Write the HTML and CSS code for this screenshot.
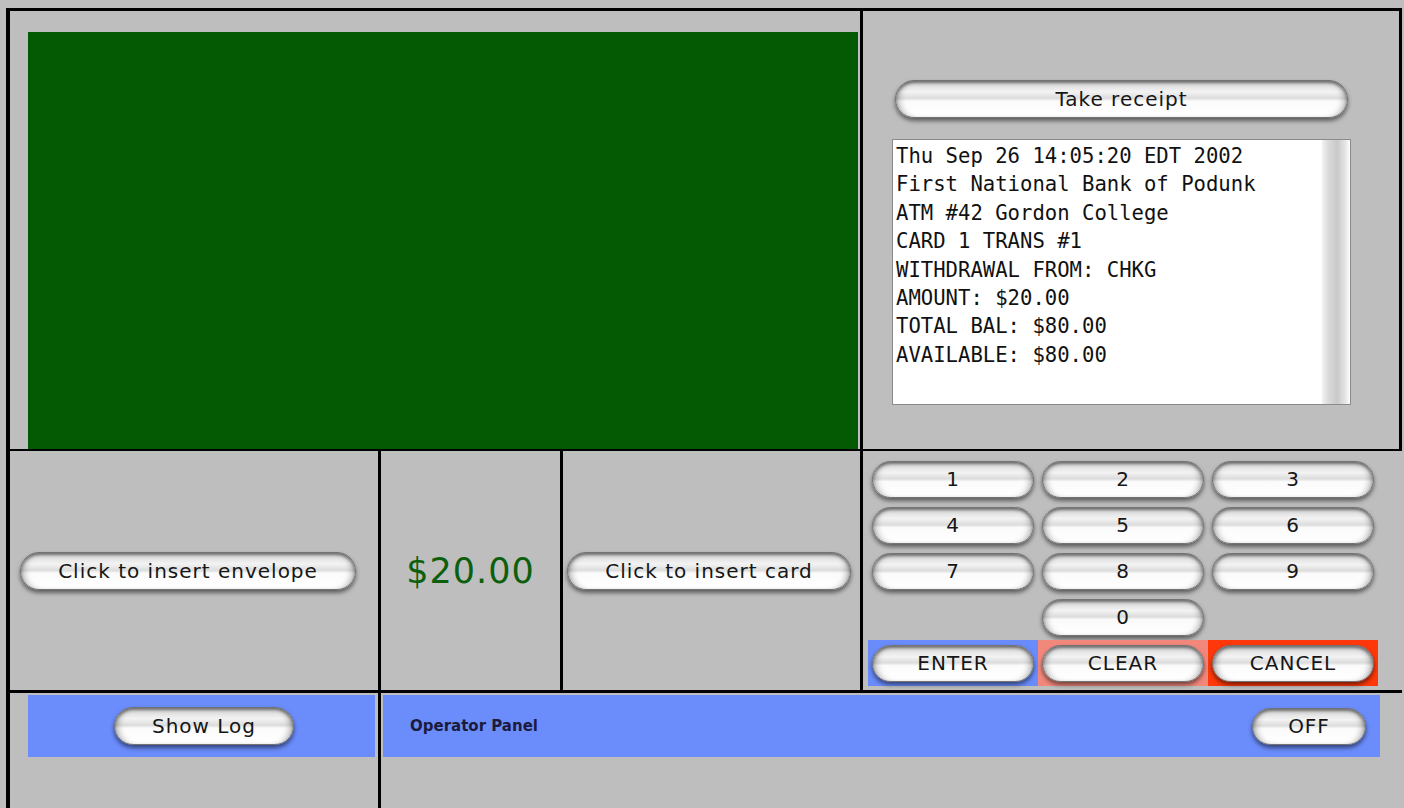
FILE: index.html
```html
<!DOCTYPE html>
<html lang="en">
<head>
<meta charset="utf-8">
<title>ATM Simulation</title>
<link rel="stylesheet" href="styles.css">
</head>
<body>
<div class="atm">
  <div class="row row-top">
    <div class="cell cell-screen">
      <div class="display"></div>
    </div>
    <div class="cell cell-printer">
      <button class="btn btn-receipt">Take receipt</button>
      <div class="receipt">
        <pre class="receipt-text">Thu Sep 26 14:05:20 EDT 2002
First National Bank of Podunk
ATM #42 Gordon College
CARD 1 TRANS #1
WITHDRAWAL FROM: CHKG
AMOUNT: $20.00
TOTAL BAL: $80.00
AVAILABLE: $80.00</pre>
        <div class="scroll-track"></div>
      </div>
    </div>
  </div>

  <div class="row row-mid">
    <div class="cell cell-envelope">
      <button class="btn btn-wide">Click to insert envelope</button>
    </div>
    <div class="cell cell-cash">
      <span class="cash">$20.00</span>
    </div>
    <div class="cell cell-card">
      <button class="btn btn-wide btn-card">Click to insert card</button>
    </div>
    <div class="cell cell-keypad">
      <div class="keypad">
        <div class="key"><button class="btn btn-key">1</button></div>
        <div class="key"><button class="btn btn-key">2</button></div>
        <div class="key"><button class="btn btn-key">3</button></div>
        <div class="key"><button class="btn btn-key">4</button></div>
        <div class="key"><button class="btn btn-key">5</button></div>
        <div class="key"><button class="btn btn-key">6</button></div>
        <div class="key"><button class="btn btn-key">7</button></div>
        <div class="key"><button class="btn btn-key">8</button></div>
        <div class="key"><button class="btn btn-key">9</button></div>
        <div class="key"></div>
        <div class="key"><button class="btn btn-key">0</button></div>
        <div class="key"></div>
        <div class="key key-enter"><button class="btn btn-key">ENTER</button></div>
        <div class="key key-clear"><button class="btn btn-key">CLEAR</button></div>
        <div class="key key-cancel"><button class="btn btn-key">CANCEL</button></div>
      </div>
    </div>
  </div>

  <div class="row row-bottom">
    <div class="cell cell-log">
      <div class="band band-log">
        <button class="btn btn-log">Show Log</button>
      </div>
    </div>
    <div class="cell cell-operator">
      <div class="band band-operator">
        <span class="operator-label">Operator Panel</span>
        <button class="btn btn-off">OFF</button>
      </div>
    </div>
  </div>
</div>
</body>
</html>
```

FILE: styles.css
```css
html, body {
  margin: 0;
  padding: 0;
}

body {
  width: 1404px;
  height: 808px;
  overflow: hidden;
  background: #bebebe;
  font-family: "DejaVu Sans", Verdana, sans-serif;
  color: #1a1a1a;
}

.atm {
  margin: 8px 0 0 6px;
  width: 1392px;
  border-top: 3px solid #000;
  border-left: 4px solid #000;
}

.row {
  display: flex;
}

.row-top {
  height: 438px;
  border-bottom: 2px solid #000;
}

.row-mid {
  height: 239px;
  border-bottom: 3px solid #000;
}

.row-bottom {
  height: 120px;
}

.cell {
  box-sizing: border-box;
}

/* green display window */
.cell-screen {
  width: 853px;
  padding: 21px 0 0 18px;
  border-right: 3px solid #000;
}

.display {
  width: 830px;
  height: 417px;
  background: #035a03;
}

/* receipt printer */
.cell-printer {
  flex: 1;
  padding: 69px 0 0 29px;
  border-right: 3px solid #000;
}

.btn {
  display: flex;
  align-items: center;
  justify-content: center;
  box-sizing: border-box;
  margin: 0;
  padding: 0;
  border: 1px solid #737373;
  border-radius: 999px;
  font-family: "DejaVu Sans", Verdana, sans-serif;
  font-size: 20px;
  letter-spacing: 1px;
  color: #161616;
  background:
    linear-gradient(to bottom,
      #c4c4c4 0%,
      #e6e6e6 18%,
      #f3f3f3 30%,
      #dcdcdc 48%,
      #fbfbfb 56%,
      #ffffff 100%);
  box-shadow:
    inset 0 2px 3px rgba(0, 0, 0, 0.4),
    inset 7px 0 6px -4px rgba(0, 0, 0, 0.28),
    inset -7px 0 6px -4px rgba(0, 0, 0, 0.28),
    0 3px 4px rgba(0, 0, 0, 0.5);
}

.btn-receipt {
  width: 453px;
  height: 38px;
  margin-left: 3px;
}

.receipt {
  position: relative;
  width: 459px;
  height: 266px;
  margin-top: 21px;
  box-sizing: border-box;
  border: 1px solid #8a8a8a;
  background: #fff;
}

.receipt-text {
  margin: 0;
  padding: 2px 0 0 3px;
  font-family: "DejaVu Sans Mono", "Liberation Mono", monospace;
  font-size: 20.6px;
  line-height: 28.4px;
  color: #111;
}

.scroll-track {
  position: absolute;
  top: 0;
  right: 0;
  bottom: 0;
  width: 28px;
  background: linear-gradient(to right, #f2f2f2 0%, #d9d9d9 25%, #c9c9c9 55%, #e8e8e8 85%, #ffffff 100%);
}

/* middle row */
.cell-envelope {
  width: 371px;
  border-right: 3px solid #000;
  display: flex;
  align-items: center;
  padding-left: 10px;
}

.btn-wide {
  height: 38px;
}

.cell-envelope .btn-wide {
  width: 336px;
}

.cell-cash {
  width: 182px;
  border-right: 3px solid #000;
  display: flex;
  align-items: center;
  justify-content: center;
}

.cash {
  font-size: 35px;
  letter-spacing: 1px;
  color: #0c5f0c;
}

.cell-card {
  width: 300px;
  border-right: 3px solid #000;
  display: flex;
  align-items: center;
  padding-left: 4px;
}

.btn-card {
  width: 284px;
}

.cell-keypad {
  flex: 1;
  padding: 5px 0 0 5px;
}

.keypad {
  display: grid;
  grid-template-columns: repeat(3, 170px);
  grid-auto-rows: 46px;
  width: 510px;
}

.key {
  display: flex;
  align-items: center;
  justify-content: center;
}

.btn-key {
  width: 162px;
  height: 37px;
}

.key-enter { background: #6a8cfb; }
.key-clear { background: #f2887c; }
.key-cancel { background: #fe380a; }

/* bottom row */
.cell-log {
  width: 371px;
  border-right: 3px solid #000;
  padding: 2px 0 0 18px;
}

.band {
  height: 62px;
  background: #6b8cfb;
  display: flex;
  align-items: center;
}

.band-log {
  width: 347px;
  justify-content: center;
}

.btn-log {
  width: 180px;
  height: 38px;
  margin-left: 5px;
}

.cell-operator {
  flex: 1;
  padding: 2px 0 0 2px;
}

.band-operator {
  width: 997px;
  justify-content: space-between;
  padding: 0 14px 0 27px;
  box-sizing: border-box;
}

.operator-label {
  font-size: 15px;
  font-weight: bold;
  color: #1b1b3b;
}

.btn-off {
  width: 114px;
  height: 37px;
}
```
